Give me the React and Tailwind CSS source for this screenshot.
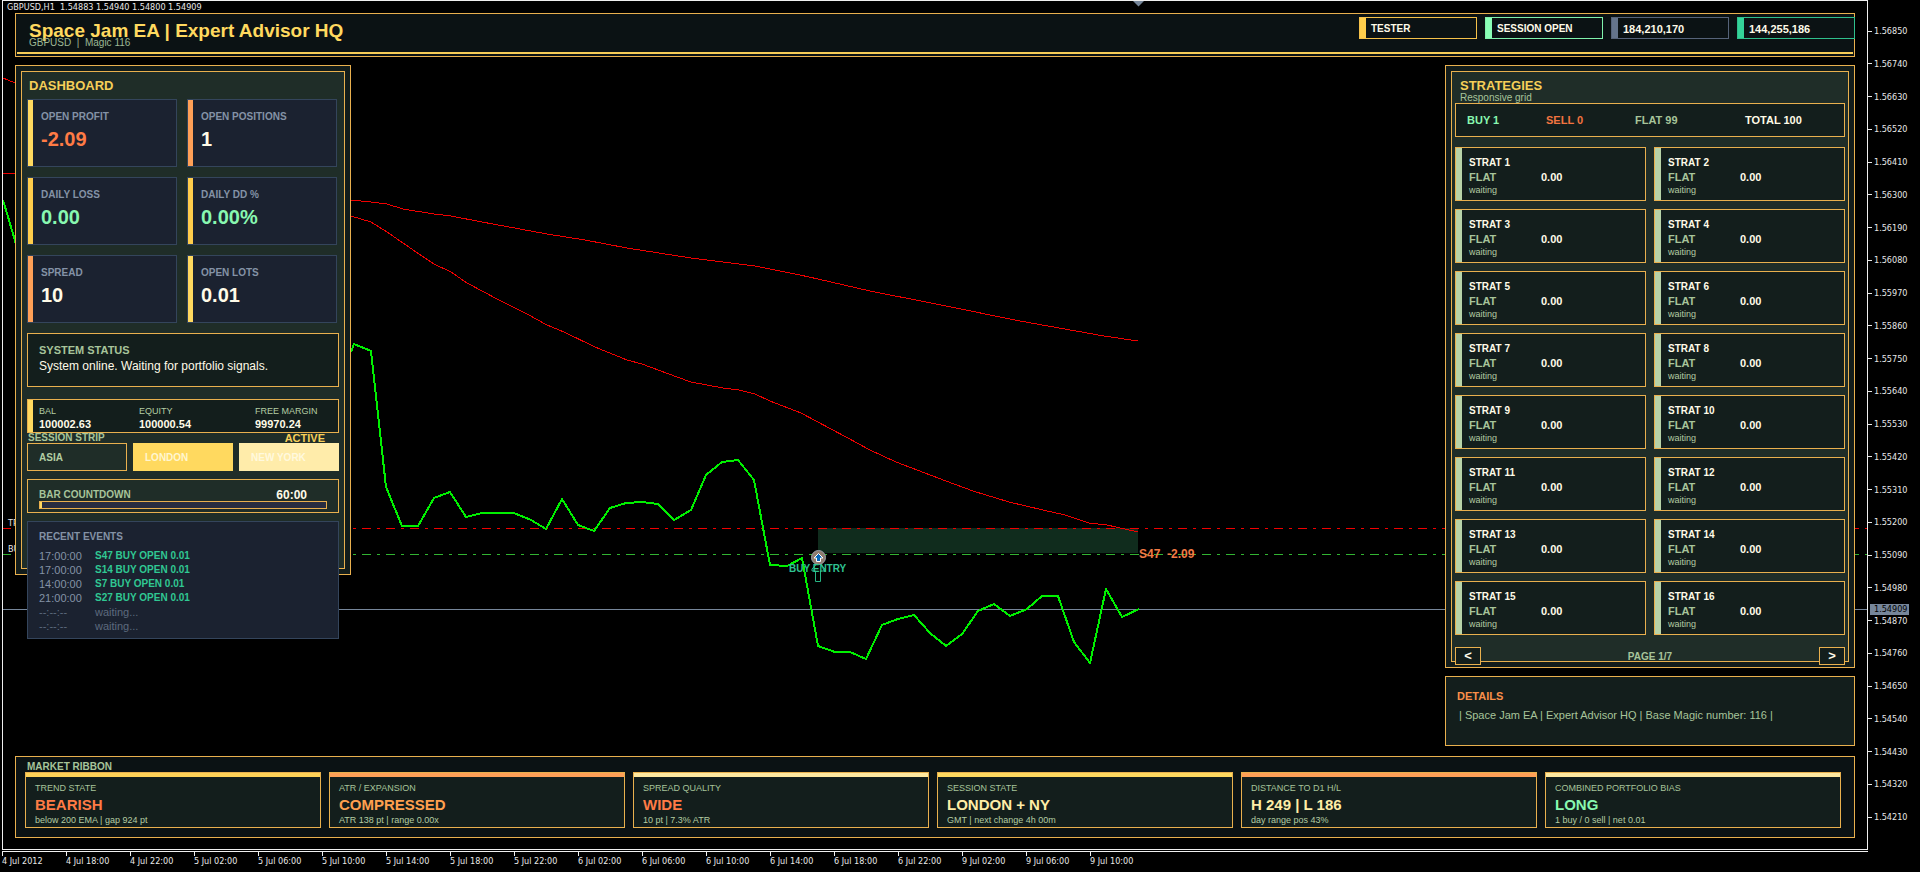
const STATS = [
  { label: 'OPEN PROFIT', value: '-2.09', bar: 'bg-[#ffd95f]', text: 'text-[#ff7b45]' },
  { label: 'OPEN POSITIONS', value: '1', bar: 'bg-[#ffa057]', text: 'text-[#fffbe8]' },
  { label: 'DAILY LOSS', value: '0.00', bar: 'bg-[#ffcd4b]', text: 'text-[#88f8b0]' },
  { label: 'DAILY DD %', value: '0.00%', bar: 'bg-[#ffcd4b]', text: 'text-[#88f8b0]' },
  { label: 'SPREAD', value: '10', bar: 'bg-[#ffa057]', text: 'text-[#fffbe8]' },
  { label: 'OPEN LOTS', value: '0.01', bar: 'bg-[#ffd95f]', text: 'text-[#fffbe8]' },
];

const CHIPS = [
  { text: 'TESTER', border: 'border-[#f5c14a]', bar: 'bg-[#ffcd4b]', size: 'text-[10px]' },
  { text: 'SESSION OPEN', border: 'border-[#80f2ac]', bar: 'bg-[#8affb6]', size: 'text-[10px]' },
  { text: '184,210,170', border: 'border-[#566379]', bar: 'bg-[#64748b]', size: 'text-[11px]' },
  { text: '144,255,186', border: 'border-[#2fbf8c]', bar: 'bg-[#34d399]', size: 'text-[11px]' },
];

const EVENTS = [
  ['17:00:00', 'S47 BUY OPEN 0.01'],
  ['17:00:00', 'S14 BUY OPEN 0.01'],
  ['14:00:00', 'S7 BUY OPEN 0.01'],
  ['21:00:00', 'S27 BUY OPEN 0.01'],
  ['--:--:--', null],
  ['--:--:--', null],
];

const RIBBON = [
  { label: 'TREND STATE', value: 'BEARISH', note: 'below 200 EMA | gap 924 pt', bar: 'bg-[#ffd257]', text: 'text-[#ff7b45]' },
  { label: 'ATR / EXPANSION', value: 'COMPRESSED', note: 'ATR 138 pt | range 0.00x', bar: 'bg-[#ffa057]', text: 'text-[#ffa04f]' },
  { label: 'SPREAD QUALITY', value: 'WIDE', note: '10 pt | 7.3% ATR', bar: 'bg-[#ffe9a0]', text: 'text-[#ff7b45]' },
  { label: 'SESSION STATE', value: 'LONDON + NY', note: 'GMT | next change 4h 00m', bar: 'bg-[#ffd95f]', text: 'text-[#ffeda6]' },
  { label: 'DISTANCE TO D1 H/L', value: 'H 249 | L 186', note: 'day range pos 43%', bar: 'bg-[#ffa057]', text: 'text-[#ffeda6]' },
  { label: 'COMBINED PORTFOLIO BIAS', value: 'LONG', note: '1 buy / 0 sell | net 0.01', bar: 'bg-[#ffe9a0]', text: 'text-[#88f8b0]' },
];

const STRATEGIES = Array.from({ length: 16 }, (_, i) => i + 1);
const PRICES = Array.from({ length: 25 }, (_, i) => ((156850 - i * 110) / 100000).toFixed(5));
const TIMES = [
  '4 Jul 2012', '4 Jul 18:00', '4 Jul 22:00', '5 Jul 02:00', '5 Jul 06:00', '5 Jul 10:00',
  '5 Jul 14:00', '5 Jul 18:00', '5 Jul 22:00', '6 Jul 02:00', '6 Jul 06:00', '6 Jul 10:00',
  '6 Jul 14:00', '6 Jul 18:00', '6 Jul 22:00', '9 Jul 02:00', '9 Jul 06:00', '9 Jul 10:00',
];

const PRICE_LINE =
  '351,352 354,344 371,351 386,487 402,526 418,526 434,498 450,492 466,517 482,513 514,513 531,520 546,529 562,499 578,525 594,531 610,508 626,503 642,502 658,504 674,520 691,510 706,475 722,462 738,460 754,480 770,565 787,566 802,558 818,646 835,652 850,652 866,659 882,625 898,619 914,615 930,633 946,646 962,634 978,611 994,604 1010,616 1027,609 1042,596 1058,596 1074,642 1090,663 1106,589 1122,617 1139,609';
const SLOW_EMA =
  '351,200 371,202 387,204 403,209 434,214 451,216 482,222 547,234 585,240 627,248 691,258 755,266 800,275 818,279 870,291 936,304 1020,321 1104,336 1138,341';
const FAST_EMA =
  '351,216 371,222 387,232 419,254 434,264 451,272 467,283 497,299 527,314 547,325 564,332 595,347 627,360 642,364 677,377 691,382 723,388 739,390 755,394 770,401 801,413 846,437 870,450 896,462 946,481 973,491 1009,502 1043,510 1065,515 1089,523 1107,525 1138,532';

const AXIS_FONT = "font-['DejaVu_Sans_Condensed','Noto_Sans',sans-serif]";

function Chart() {
  return (
    <svg className="absolute inset-0 h-full w-full" aria-hidden="true">
      <line x1="0" y1="608.5" x2="100%" y2="608.5" stroke="#76869a" />
      <g transform="translate(-3 -1)">
        <rect x="818" y="528" width="320" height="25" fill="#102c1d" />
        <g fill="none" stroke="#f00000" shapeRendering="crispEdges">
          <polyline points="3,78 15,83" />
          <polyline points="3,173 15,174" />
          <polyline points={SLOW_EMA} />
          <polyline points={FAST_EMA} />
        </g>
      </g>
      <line x1="-1" y1="527.5" x2="100%" y2="527.5" stroke="#f00000" strokeDasharray="9 6 3 6" />
      <line x1="-1" y1="553.5" x2="100%" y2="553.5" stroke="#32b432" strokeDasharray="9 6 3 6" />
      <g transform="translate(-3 -1)">
        <g fill="none" stroke="#00f000" strokeWidth="2" strokeLinejoin="round" shapeRendering="crispEdges">
          <polyline points="3,200 16,244" />
          <polyline points={PRICE_LINE} />
        </g>
        <path d="M818.500 562 L825 569 V571 L820.500 571 V581.500 H815.500 V571 H812 V569 Z" fill="none" stroke="#26b583" />
        <circle cx="818.500" cy="557.500" r="7" fill="#8f7b6e" stroke="#98a2ad" />
        <path d="M818.500 553.500 L823 558 H820.500 V561.500 H816.500 V558 H814 Z" fill="#0767b8" stroke="#ffffff" />
        <g className="font-['Liberation_Sans',Arial,sans-serif] font-bold">
          <text x="789" y="572" fontSize="10" fill="#2fc391">BUY ENTRY</text>
          <text x="1139" y="558" fontSize="12" fill="#f27a45" xmlSpace="preserve">S47  -2.09</text>
        </g>
        <g className={AXIS_FONT} fontSize="9" fill="#e8e8e8">
          <text x="8" y="526">TP</text>
          <text x="8" y="552">BUY</text>
        </g>
        <path d="M1133 1 H1144 L1138.500 6.500 Z" fill="#76869a" />
      </g>
    </svg>
  );
}

function Header() {
  return (
    <header className="flex flex-col border border-[#e9b04e] bg-[#0b1214]">
      <div className="flex h-[38px] items-start justify-between">
        <div className="pt-[5px] pl-[13px]">
          <h1 className="text-[19px] leading-6 font-bold text-[#ffd95f]">Space Jam EA | Expert Advisor HQ</h1>
          <p className="-mt-1.5 text-[10px] leading-3 whitespace-pre text-[#9db894]">{'GBPUSD  |  Magic 116'}</p>
        </div>
        <ul className="-mr-px flex gap-2 pt-[3px]">
          {CHIPS.map((c) => (
            <li key={c.text} className={`flex h-[22px] w-[118px] border ${c.border}`}>
              <span className={`w-1.5 ${c.bar}`} />
              <span className={`pl-[5px] leading-[22px] font-bold text-[#fffbe8] ${c.size}`}>{c.text}</span>
            </li>
          ))}
        </ul>
      </div>
      <div className="mx-px mb-0.5 h-0.5 bg-[#f7cc58]" />
    </header>
  );
}

function Dashboard() {
  return (
    <section className="w-[336px] shrink-0 border border-[#e9b04e] bg-[#121c1b] p-[5px]">
      <div className="border border-[#e9b04e] bg-[#1f2d28] px-[5px] pt-[5px]">
        <h2 className="pl-0.5 text-[13px] leading-[18px] font-bold text-[#f6cf58]">DASHBOARD</h2>
        <div className="mt-1 mr-0.5 grid grid-cols-2 gap-2.5">
          {STATS.map((s) => (
            <div key={s.label} className="flex border border-[#34455c] bg-[#1b2230]">
              <span className={`w-[5px] ${s.bar}`} />
              <div className="pt-[11px] pb-[15px] pl-2">
                <div className="text-[10px] leading-3 font-bold text-[#8492a6]">{s.label}</div>
                <div className={`mt-1 text-[20px] leading-6 font-bold ${s.text}`}>{s.value}</div>
              </div>
            </div>
          ))}
        </div>

        <div className="mt-2.5 border border-[#e9b04e] bg-[#131e1c] px-[11px] pt-2.5 pb-3">
          <h3 className="text-[11px] leading-3 font-bold text-[#a7c49a]">SYSTEM STATUS</h3>
          <p className="mt-0.5 text-[12px] leading-4 text-[#fffbe8]">System online. Waiting for portfolio signals.</p>
        </div>

        <div className="mt-3 flex border border-[#e9b04e] bg-[#131e1c]">
          <span className="w-[5px] bg-[#ffd95f]" />
          <dl className="grid flex-1 grid-cols-[100px_116px_1fr] pt-[5px] pb-px pl-1.5">
            {[['BAL', '100002.63'], ['EQUITY', '100000.54'], ['FREE MARGIN', '99970.24']].map(([k, v]) => (
              <div key={k}>
                <dt className="text-[9px] leading-3 text-[#b3cda3]">{k}</dt>
                <dd className="text-[11px] leading-[14px] font-bold text-[#fffbe8]">{v}</dd>
              </div>
            ))}
          </dl>
        </div>

        <div className="flex justify-between pr-3.5 pl-px font-bold leading-[10px]">
          <span className="text-[10px] leading-[10px] text-[#a7c49a]">SESSION STRIP</span>
          <span className="text-[11px] leading-[10px] text-[#f6cf58]">ACTIVE</span>
        </div>
        <div className="grid grid-cols-3 gap-1.5 text-[10px] font-bold">
          <button type="button" className="h-7 border border-[#e9b04e] pl-[11px] text-left text-[#b3cda3]">ASIA</button>
          <button type="button" className="h-7 border border-[#ffd95f] bg-[#ffd95f] pl-[11px] text-left text-[#fff6d0]">LONDON</button>
          <button type="button" className="h-7 border border-[#ffecaa] bg-[#ffecaa] pl-[11px] text-left text-[#fff9de]">NEW YORK</button>
        </div>

        <div className="mt-2 border border-[#e9b04e] px-[11px] pt-[9px] pb-[3px]">
          <div className="flex justify-between pr-5 font-bold leading-3">
            <span className="text-[10px] leading-3 text-[#a7c49a]">BAR COUNTDOWN</span>
            <span className="text-[12px] leading-3 text-[#fffbe8]">60:00</span>
          </div>
          <div className="flex h-2 border border-[#e9b04e] bg-[#282d40]">
            <span className="w-0.5 bg-[#ffd95f]" />
          </div>
        </div>

        <div className="mt-2 mb-[-71px] border border-[#34455c] bg-[#1b2230] px-[11px] pt-[9px] pb-[5px]">
          <h3 className="text-[10px] leading-3 font-bold text-[#8492a6]">RECENT EVENTS</h3>
          <ul className="mt-1.5">
            {EVENTS.map(([time, text], i) => (
              <li key={i} className="flex leading-[14px]">
                <span className={`w-14 text-[11px] leading-[14px] ${text ? 'text-[#8492a6]' : 'text-[#5d6a7e]'}`}>{time}</span>
                {text ? (
                  <span className="text-[10px] leading-[14px] font-bold text-[#30c893]">{text}</span>
                ) : (
                  <span className="text-[11px] leading-[14px] text-[#5d6a7e]">waiting...</span>
                )}
              </li>
            ))}
          </ul>
        </div>
      </div>
    </section>
  );
}

function Strategies() {
  return (
    <div className="w-[410px] shrink-0">
      <section className="border border-[#e9b04e] bg-[#121c1b] p-[5px]">
        <div className="border border-[#e9b04e] bg-[#1f2d28] px-[3px] pt-[5px]">
          <h2 className="pl-[5px] text-[13px] leading-[18px] font-bold text-[#f6cf58]">STRATEGIES</h2>
          <p className="-mt-0.5 pl-[5px] text-[10px] leading-[10px] text-[#a7c49a]">Responsive grid</p>
          <div className="grid grid-cols-[79px_89px_110px_1fr] border border-[#e9b04e] bg-[#131e1c] pl-[11px] text-[11px] leading-8 font-bold">
            <span className="text-[#88f8b0]">BUY 1</span>
            <span className="text-[#f27440]">SELL 0</span>
            <span className="text-[#a7c49a]">FLAT 99</span>
            <span className="text-[#fffbe8]">TOTAL 100</span>
          </div>
          <div className="mt-2.5 grid grid-cols-2 gap-2">
            {STRATEGIES.map((n) => (
              <article key={n} className="flex border border-[#e9b04e] bg-[#131e1c]">
                <span className="w-1.5 bg-[#b8d3a8]" />
                <div className="pt-[9px] pb-[5px] pl-[7px]">
                  <h3 className="text-[10px] leading-3 font-bold text-[#fffbe8]">STRAT {n}</h3>
                  <div className="flex text-[11px] leading-4 font-bold">
                    <span className="w-[72px] text-[#a7c49a]">FLAT</span>
                    <span className="text-[#fffbe8]">0.00</span>
                  </div>
                  <p className="text-[9px] leading-[10px] text-[#b3cda3]">waiting</p>
                </div>
              </article>
            ))}
          </div>
          <nav className="mt-3 -mb-1 flex items-center justify-between text-[10px] font-bold" aria-label="Strategy pages">
            <button type="button" aria-label="Previous page" className="h-[18px] w-[26px] border border-[#e9b04e] bg-[#131e1c] text-[13px] leading-4 text-[#fffbe8]">&lt;</button>
            <span className="pt-0.5 leading-4 text-[#a7c49a]">PAGE 1/7</span>
            <button type="button" aria-label="Next page" className="h-[18px] w-[26px] border border-[#e9b04e] bg-[#131e1c] text-[13px] leading-4 text-[#fffbe8]">&gt;</button>
          </nav>
        </div>
      </section>
      <section className="mt-2 border border-[#e9b04e] bg-[#131e1c] px-[11px] pt-3 pb-[23px]">
        <h2 className="text-[11px] leading-[14px] font-bold text-[#f98f4a]">DETAILS</h2>
        <p className="mt-[5px] pl-0.5 text-[11px] leading-[14px] text-[#a7c49a]">
          | Space Jam EA | Expert Advisor HQ | Base Magic number: 116 |
        </p>
      </section>
    </div>
  );
}

function Ribbon() {
  return (
    <section className="mt-2.5 border border-[#e9b04e] bg-[#0b1214] pt-[5px] pr-[13px] pb-[9px] pl-[9px]">
      <h2 className="pl-0.5 text-[10px] leading-[10px] font-bold text-[#a7c49a]">MARKET RIBBON</h2>
      <div className="grid grid-cols-6 gap-2">
        {RIBBON.map((r) => (
          <div key={r.label} className="border border-[#e9b04e] bg-[#131e1c]">
            <div className={`h-1 ${r.bar}`} />
            <div className="px-[9px] pt-[5px] pb-px">
              <div className="text-[9px] leading-3 text-[#a7c49a]">{r.label}</div>
              <div className={`mt-[3px] text-[15px] leading-4 font-bold ${r.text}`}>{r.value}</div>
              <div className="mt-px text-[9px] leading-3 text-[#b3cda3]">{r.note}</div>
            </div>
          </div>
        ))}
      </div>
    </section>
  );
}

export default function App() {
  return (
    <div className="flex min-h-screen flex-col overflow-x-hidden bg-black font-['Liberation_Sans',Arial,sans-serif]">
      <div className="flex flex-1">
        <main className="relative ml-0.5 min-w-0 flex-1 border border-[#f0f0f0]">
          <Chart />
          <div className="relative px-3 pb-[11px]">
            <p className={`-ml-2 text-[9px] leading-3 whitespace-pre text-[#e8e8e8] ${AXIS_FONT}`}>
              {'GBPUSD,H1  1.54883 1.54940 1.54800 1.54909'}
            </p>
            <Header />
            <div className="mt-2 flex items-start justify-between">
              <Dashboard />
              <Strategies />
            </div>
            <Ribbon />
          </div>
        </main>
        <aside className={`relative w-[52px] shrink-0 text-[9px] text-[#e8e8e8] ${AXIS_FONT}`}>
          <ul className="flex h-full flex-col justify-between pt-[25px] pb-[27px]">
            {PRICES.map((p) => (
              <li key={p} className="flex items-center gap-0.5 leading-3">
                <span className="h-px w-1 bg-[#e8e8e8]" />
                {p}
              </li>
            ))}
          </ul>
          <span className="absolute top-[604px] left-0.5 h-[11px] w-[39px] bg-[#76869a] pl-1 leading-[11px] text-black">1.54909</span>
        </aside>
      </div>
      <footer className="mt-px mr-[52px] ml-0.5 border-t border-[#f0f0f0] pb-1.5">
        <ol className={`flex text-[9px] text-[#e8e8e8] ${AXIS_FONT}`}>
          {TIMES.map((t) => (
            <li key={t} className="w-16 shrink-0">
              <div className="h-1 w-px bg-[#f0f0f0]" />
              <div className="leading-[10px] whitespace-nowrap">{t}</div>
            </li>
          ))}
        </ol>
      </footer>
    </div>
  );
}
